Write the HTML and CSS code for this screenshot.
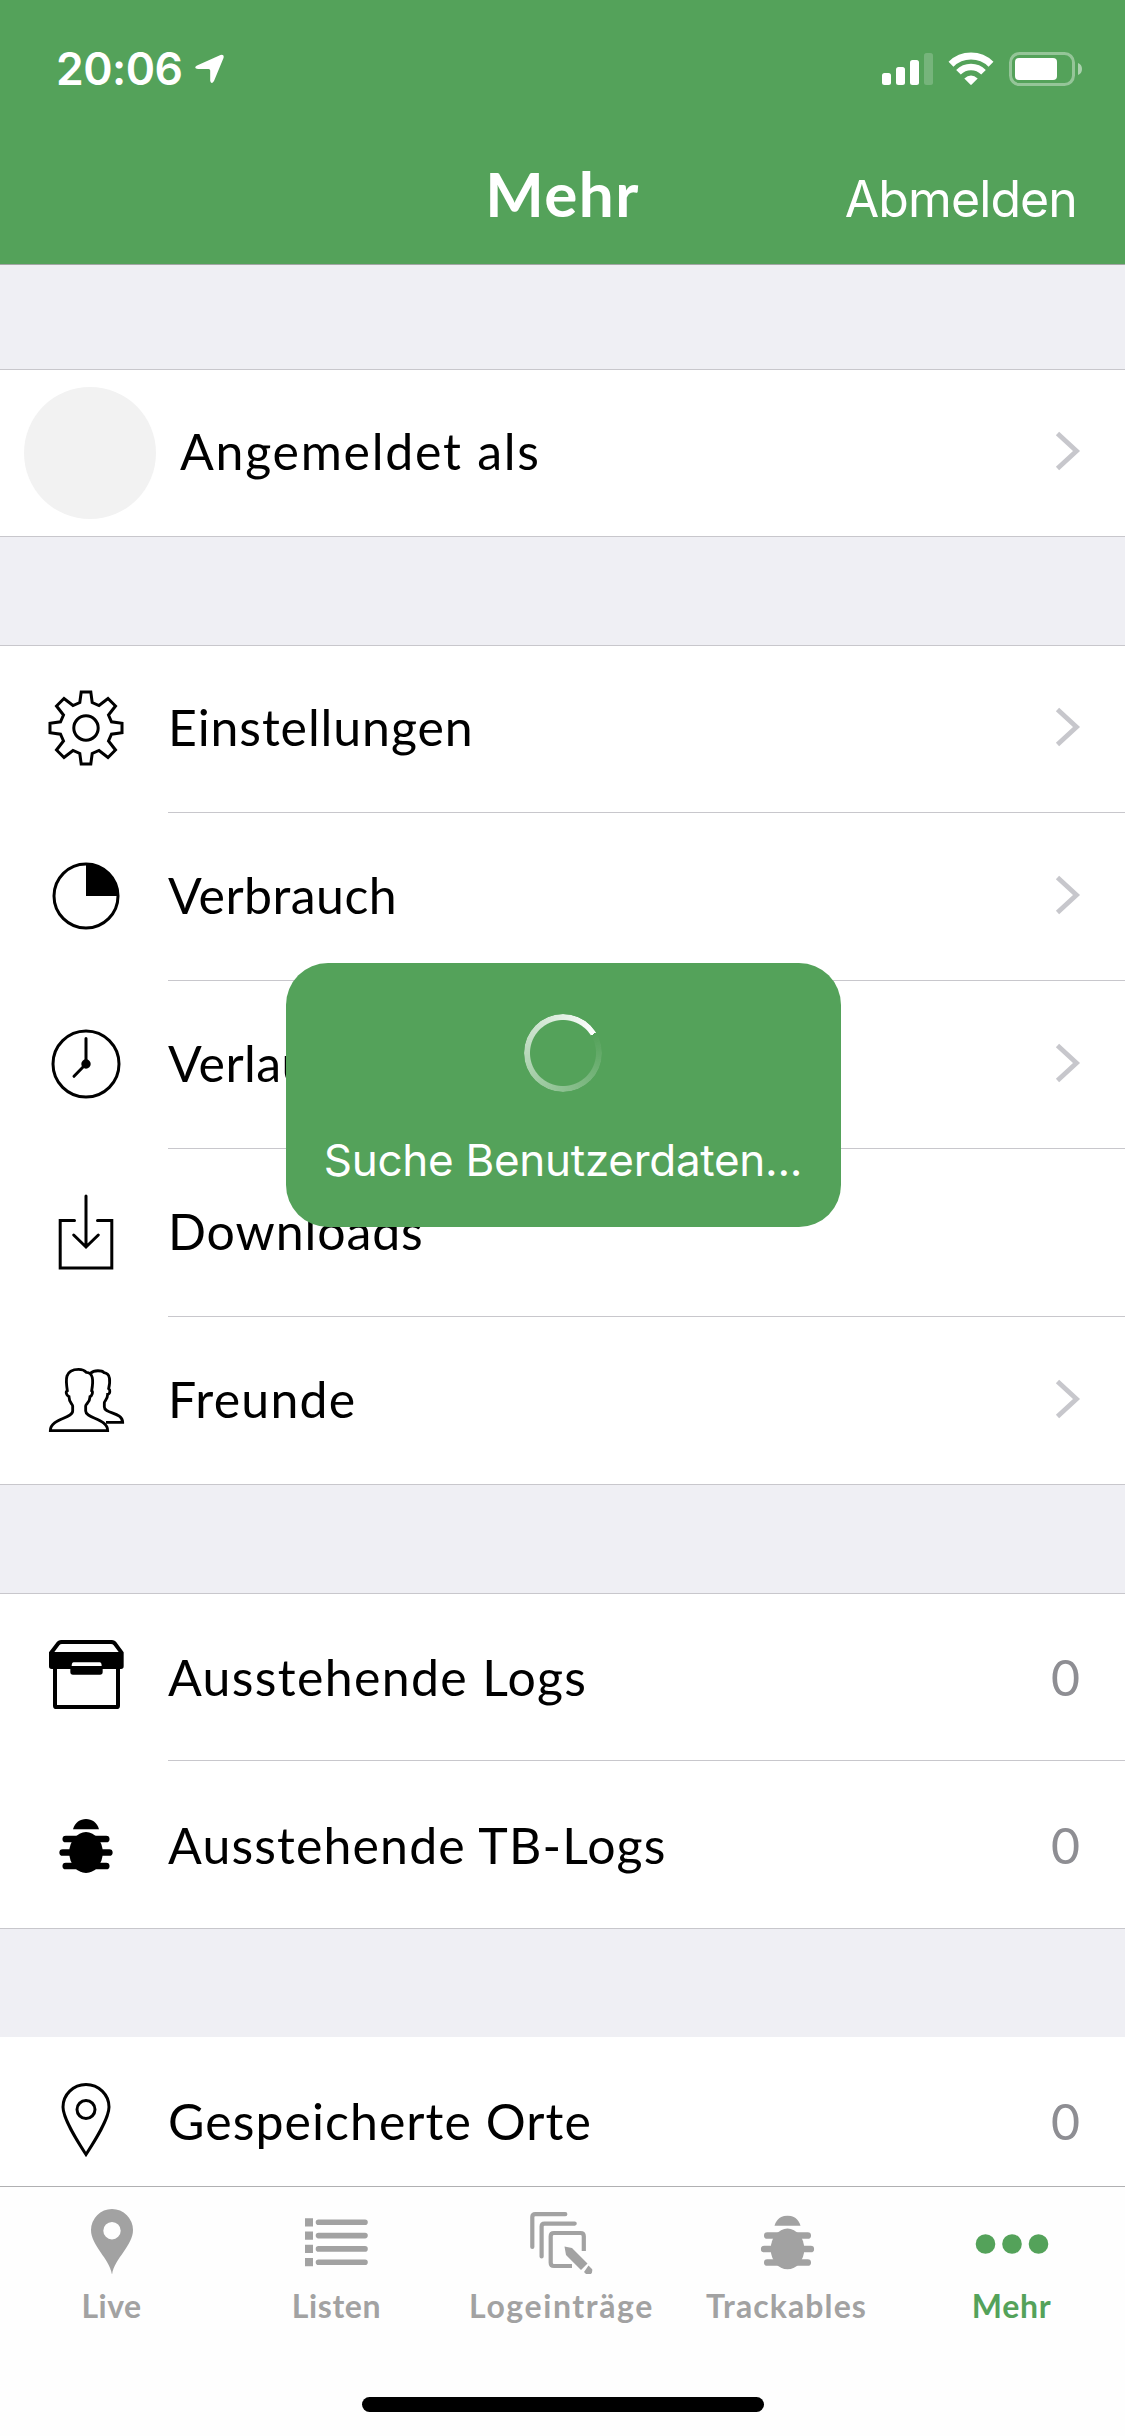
FILE: index.html
```html
<!DOCTYPE html>
<html lang="de">
<head>
<meta charset="utf-8">
<title>Mehr</title>
<link rel="stylesheet" href="styles.css">
</head>
<body>
<svg class="defs" aria-hidden="true">
  <symbol id="bug" viewBox="-27 -27 54 54">
    <path d="M-13-16.800C-11-23.500-6-27 0-27S11-23.500 13-16.800Z"/>
    <ellipse cx="0" cy="6.500" rx="16.800" ry="20.400"/>
    <path d="M-20.200-7H20.200M-23.300 6.500H23.300M-20.200 20H20.200" stroke="currentColor" stroke-width="6.700" stroke-linecap="round"/>
  </symbol>
  <symbol id="chevron" viewBox="0 0 26 42">
    <path d="M2.500 3.500L21.500 21L2.500 38.500" fill="none" stroke="currentColor" stroke-width="4.800"/>
  </symbol>
</svg>
<div class="screen">
  <header class="header">
    <div class="status">
      <span class="time">20:06</span>
      <svg class="location" width="32" height="32" viewBox="0 0 32 32"><path d="M3 12.500L26.500 2Q30.500 1 29.500 5L20 28Q17.500 32 16.200 28V17.500Q16.200 16 14.700 16H4Q-1 15 3 12.500Z"/></svg>
      <svg class="signal" width="51" height="34" viewBox="0 0 51 34"><rect x="0" y="21" width="9" height="12" rx="2.500"/><rect x="14" y="15" width="9" height="18" rx="2.500"/><rect x="28" y="8" width="9" height="25" rx="2.500"/><rect x="42" y="1" width="9" height="32" rx="2.500" opacity=".2"/></svg>
      <svg class="wifi" width="46" height="34" viewBox="0 0 46 34"><g fill="none" stroke="currentColor"><path d="M3 12.300A28.500 28.500 0 0 1 43 12.300" stroke-width="7"/><path d="M10.500 20.200A17.600 17.600 0 0 1 35.500 20.200" stroke-width="6.500"/></g><path d="M16.300 26.500Q23 20.500 29.700 26.500L23.700 32.600Q23 33.300 22.300 32.600Z"/></svg>
      <svg class="battery" width="74" height="34" viewBox="0 0 74 34"><rect x="1.500" y="1.500" width="63" height="31" rx="9" fill="none" stroke="currentColor" stroke-width="3" opacity=".38"/><rect x="6" y="6" width="42" height="22" rx="4"/><path d="M69 11Q73 12.500 73 17T69 23Z" opacity=".5"/></svg>
    </div>
    <nav class="nav">
      <h1 class="title">Mehr</h1>
      <a class="logout">Abmelden</a>
    </nav>
  </header>

  <main class="list">
    <section class="group group-account">
      <div class="row">
        <span class="avatar"></span>
        <div class="cell"><span class="label l-account">Angemeldet als</span><svg class="chevron"><use href="#chevron"/></svg></div>
      </div>
    </section>

    <section class="group">
      <div class="row">
        <svg class="icon line" viewBox="-39 -39 78 78"><path d="M-4.800-36H4.800L6.200-25.500L13-22.500L22-29.500L29.500-22L22.500-13L25.500-6.200L36-4.800V4.800L25.500 6.200L22.500 13L29.500 22L22 29.500L13 22.500L6.200 25.500L4.800 36H-4.800L-6.200 25.500L-13 22.500L-22 29.500L-29.500 22L-22.500 13L-25.500 6.200L-36 4.800V-4.800L-25.500-6.200L-22.500-13L-29.500-22L-22-29.500L-13-22.500L-6.200-25.500Z"/><circle r="12.200"/></svg>
        <div class="cell"><span class="label l-settings">Einstellungen</span><svg class="chevron"><use href="#chevron"/></svg></div>
      </div>
      <div class="row">
        <svg class="icon line" viewBox="-39 -39 78 78"><circle r="32"/><path class="solid" d="M0 0V-32A32 32 0 0 1 32 0Z" stroke="none"/></svg>
        <div class="cell"><span class="label l-usage">Verbrauch</span><svg class="chevron"><use href="#chevron"/></svg></div>
      </div>
      <div class="row">
        <svg class="icon line" viewBox="-39 -39 78 78"><circle r="33"/><path d="M0-25.500V0L-12 12.300" stroke-linecap="round"/><circle class="solid" r="3.200"/></svg>
        <div class="cell"><span class="label l-usage">Verlauf</span><svg class="chevron"><use href="#chevron"/></svg></div>
      </div>
      <div class="row">
        <svg class="icon line" viewBox="-39 -39 78 78"><path d="M-11.500-11.500H-25.800V36H25.800V-11.500H11.500M0-36V14M-12.300 3L0 15L12.300 3" stroke-linecap="round"/></svg>
        <div class="cell"><span class="label l-downloads">Downloads</span></div>
      </div>
      <div class="row">
        <svg class="icon line thick" viewBox="18 2 234 234"><path d="M28 214C28 177 95 178 95 155V140C95 134 84 130 84 112C76 109 73 97 79 94C74 62 70 30 113 30C125 30 131 33 136 39C156 40 158 61 152 94C157 97 153 110 147 112C147 130 134 134 134 140V155C134 178 200 177 200 214Z"/><path d="M148 42C160 31 183 33 189 40C209 42 208 66 203 88C209 92 207 104 200 105C200 121 190 124 190 130V143C190 164 245 158 245 189H195"/></svg>
        <div class="cell"><span class="label l-friends">Freunde</span><svg class="chevron"><use href="#chevron"/></svg></div>
      </div>
    </section>

    <section class="group group-pending">
      <div class="row">
        <svg class="icon" viewBox="18 24 234 234"><path fill-rule="evenodd" d="M24 70L48 38Q53 33 60 33H213Q220 33 225 38L248 70V112Q248 120 240 120H237V230Q237 240 227 240H46Q36 240 36 230V120H32Q24 120 24 112ZM63 45Q58 45 55 49L40 69H233L218 49Q215 45 210 45ZM48 120V228H225V120H185V129Q185 137 177 137H96Q88 137 88 129V120ZM98 100Q92 101 92 111H182Q182 101 176 100Z"/></svg>
        <div class="cell"><span class="label l-logs">Ausstehende Logs</span><span class="count">0</span></div>
      </div>
      <div class="row">
        <svg class="icon icon-bug"><use href="#bug"/></svg>
        <div class="cell"><span class="label l-tblogs">Ausstehende TB-Logs</span><span class="count">0</span></div>
      </div>
    </section>

    <section class="group group-places">
      <div class="row">
        <svg class="icon line" viewBox="-39 -39 78 78"><path d="M0 34.500C-8 22-23-1-23-13A23 22.500 0 0 1 23-13C23-1 8 22 0 34.500Z"/><circle cy="-10.500" r="9"/></svg>
        <div class="cell"><span class="label l-places">Gespeicherte Orte</span><span class="count">0</span></div>
      </div>
    </section>
  </main>

  <footer class="tabbar">
    <div class="tabs">
      <a class="tab"><svg width="78" height="72" viewBox="0 -5 78 72"><path fill-rule="evenodd" d="M39 68.500C38 53 18 39 18 23A21 21 0 0 1 60 23C60 39 40 53 39 68.500ZM39 15A8.700 8.700 0 1 0 39 32.400A8.700 8.700 0 1 0 39 15Z"/></svg><span class="t-live">Live</span></a>
      <a class="tab"><svg width="78" height="72" viewBox="0 -4.500 78 72"><path d="M7 15.800h8M7 29.100h8M7 42.400h8M7 55.700h8" stroke="currentColor" stroke-width="8.300"/><path d="M20.500 15.800H67M20.500 29.100H67M20.500 42.400H67M20.500 55.700H67" stroke="currentColor" stroke-width="5.600" stroke-linecap="round"/></svg><span class="t-lists">Listen</span></a>
      <a class="tab"><svg width="80" height="72" viewBox="2 -3 80 72"><path d="M12.300 42V12Q12.300 9.200 15.300 9.200H45.300M21.600 51.500V21.400Q21.600 18.600 24.600 18.600H54.700" fill="none" stroke="currentColor" stroke-width="4.200" stroke-linecap="round"/><path d="M52 61H34Q30.700 61 30.700 57.700V31.300Q30.700 28 34 28H60.500Q63.800 28 63.800 31.300V46" fill="none" stroke="currentColor" stroke-width="4.200"/><path d="M44.500 41.500L52 43L67.500 58.500L61 65L46 50ZM68.500 60.500L72.200 64.200Q73 70 67 70L64 67Z" stroke="#fefefe" stroke-width="2" paint-order="stroke"/></svg><span class="t-logs">Logeinträge</span></a>
      <a class="tab"><svg width="78" height="72" viewBox="0 0 78 72"><use href="#bug" x="12.500" y="13.500" width="54" height="54"/></svg><span class="t-track">Trackables</span></a>
      <a class="tab active"><svg width="78" height="72" viewBox="0 0 78 72"><circle cx="12.500" cy="42" r="9.800"/><circle cx="39" cy="42" r="9.800"/><circle cx="65.500" cy="42" r="9.800"/></svg><span class="t-more">Mehr</span></a>
    </div>
    <div class="home"></div>
  </footer>

  <div class="hud">
    <div class="spinner"></div>
    <p class="hud-text">Suche Benutzerdaten...</p>
  </div>
</div>
</body>
</html>
```
FILE: styles.css
```css
* { box-sizing: border-box; }
body { margin: 0; }
svg { display: block; fill: currentColor; flex: none; }
.defs { position: absolute; width: 0; height: 0; }

.screen {
  position: relative;
  display: flex;
  flex-direction: column;
  width: 1125px;
  height: 2436px;
  overflow: hidden;
  background: #efeff4;
  color: #000;
  font-family: Lato, "Open Sans", sans-serif;
}

/* Header */
.header {
  flex: none;
  height: 265px;
  background: #54a25a;
  border-bottom: 1px solid #a3a6a5;
  color: #fff;
}
.status {
  display: flex;
  align-items: flex-start;
  height: 132px;
  padding: 52px 42px 0 56px;
}
.time {
  width: 126px;
  font: 600 44.500px/34px Inter, sans-serif;
  letter-spacing: -0.5px;
}
.location { margin: 1px 0 0 12px; }
.signal { margin-left: auto; }
.wifi { margin-left: 15px; }
.battery { margin-left: 15px; }
.nav {
  display: grid;
  grid-template-columns: 1fr auto 1fr;
  align-items: baseline;
  height: 132px;
  padding: 23px 48px 0;
}
.title {
  grid-column: 2;
  margin: 0;
  font-size: 62px;
  line-height: 76px;
  font-weight: 700;
  letter-spacing: 1.400px;
}
.logout {
  justify-self: end;
  font: 400 50px/60px Inter, sans-serif;
  letter-spacing: -0.9px;
}

/* List */
.list { flex: 1; min-height: 0; overflow: hidden; padding-top: 104px; }
.group { margin-bottom: 108px; border: solid #c8c7cc; border-width: 1px 0; background: #fff; }
.group-places { border-top: 0; }
.row { display: flex; align-items: center; height: 168px; padding-left: 46px; }
.row:first-child { height: 167px; }
.row:last-child { height: 167px; }
.row:only-child { height: 166px; }
.group-account .row { padding-left: 24px; }
.group-places .row { height: 168px; }
.avatar { width: 132px; height: 132px; border-radius: 50%; background: #f2f2f2; }
.icon { width: 78px; height: 78px; margin: 0 -0.5px 3px 0.5px; }
.icon.line { fill: none; stroke: currentColor; stroke-width: 3; }
.icon.thick { stroke-width: 8.500; }
.icon .solid { fill: currentColor; }
.icon-bug { width: 54px; height: 54px; margin: 2px 11.500px 0 12.500px; }
.cell {
  flex: 1;
  display: flex;
  align-items: center;
  align-self: stretch;
  margin-left: 44px;
  padding: 0 44px 4px 0;
  border-bottom: 1px solid #c8c7cc;
}
.row:last-child .cell { border-bottom: 0; }
.group-account .cell { margin-left: 24px; }
.group-pending .cell, .group-places .cell { padding-bottom: 0; }
.label, .count { font-size: 50px; line-height: 60px; }
.l-account { letter-spacing: 1.750px; }
.l-settings { letter-spacing: 0.9px; }
.l-usage { letter-spacing: 0.450px; }
.l-downloads { letter-spacing: 0.9px; }
.l-friends { letter-spacing: 1.200px; }
.l-logs { letter-spacing: 1.350px; }
.l-tblogs { letter-spacing: 1.150px; }
.l-places { letter-spacing: 1.050px; }
.count { margin-left: auto; padding-right: 1px; color: #8e8e93; }
.chevron { width: 26px; height: 42px; margin-left: auto; color: #c7c7cc; }

/* Tab bar */
.tabbar { flex: none; height: 250px; border-top: 1px solid #b0b0b2; background: #fefefe; }
.tabs { display: grid; grid-template-columns: repeat(5, 225px); height: 210px; margin-left: -1px; padding-top: 15px; }
.tab { display: flex; flex-direction: column; align-items: center; color: #a2a2a2; font-size: 32px; line-height: 40px; font-weight: 700; }
.tab span { margin-top: 12px; }
.t-live { letter-spacing: 0.4px; }
.t-lists { letter-spacing: 0.6px; }
.t-logs { letter-spacing: 1.600px; }
.t-track { letter-spacing: 1.100px; }
.t-more { letter-spacing: 0.7px; }
.tab.active { color: #54a25a; }
.home { width: 402px; height: 15px; margin: 0 auto; border-radius: 8px; background: #000; }

/* Progress overlay */
.hud {
  position: absolute;
  left: 286px;
  top: 963px;
  display: flex;
  flex-direction: column;
  align-items: center;
  width: 555px;
  height: 264px;
  padding: 51px 1px 0 0;
  border-radius: 42px;
  background: #54a25a;
  color: #fff;
}
.spinner {
  width: 78px;
  height: 78px;
  border-radius: 50%;
  background: conic-gradient(from 58deg, rgba(255, 255, 255, 0), #fff);
  -webkit-mask: radial-gradient(circle, transparent 32.500px, #000 33.500px);
  mask: radial-gradient(circle, transparent 32.500px, #000 33.500px);
}
.hud-text { margin: 41px 0 0; font: 400 44px/54px Inter, sans-serif; letter-spacing: -0.28px; white-space: nowrap; }
```
